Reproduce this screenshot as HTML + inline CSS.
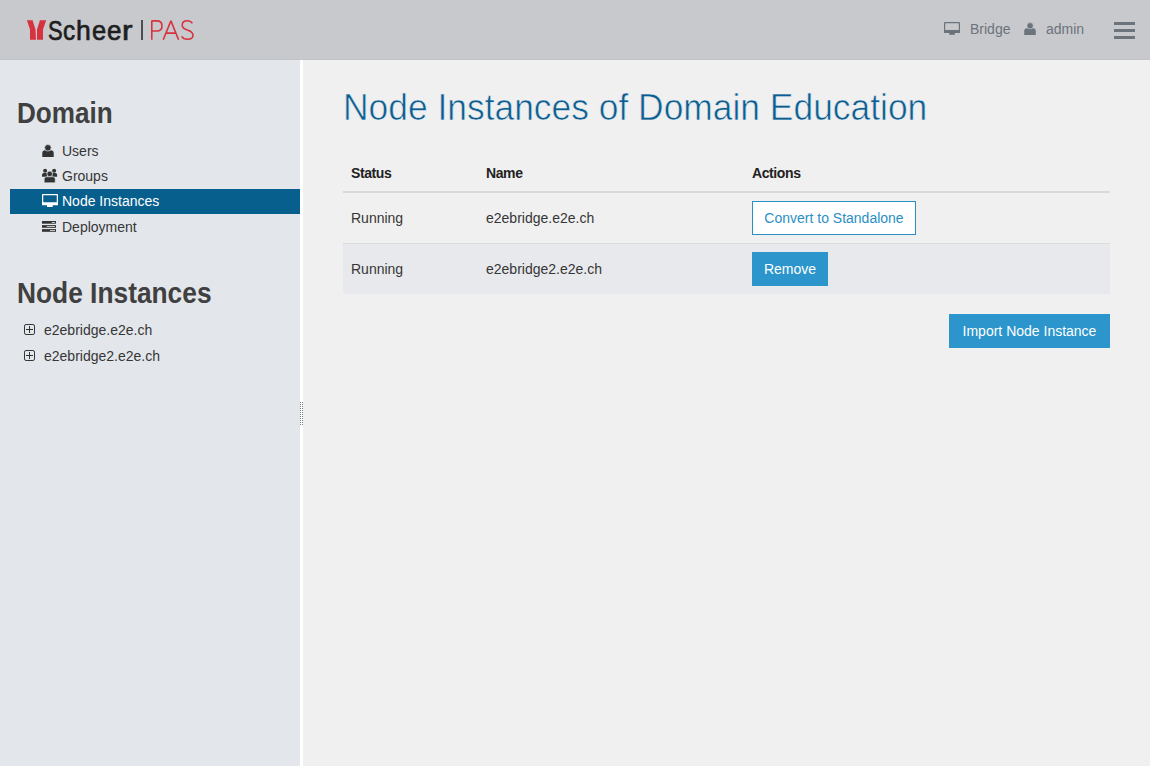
<!DOCTYPE html>
<html>
<head>
<meta charset="utf-8">
<style>
*{margin:0;padding:0;box-sizing:border-box;}
html,body{width:1150px;height:766px;overflow:hidden;}
body{font-family:"Liberation Sans",sans-serif;background:#f0f0f0;position:relative;color:#333;}
.abs{position:absolute;white-space:nowrap;}
#header{position:absolute;left:0;top:0;width:1150px;height:60px;background:#c8c9cd;border-bottom:1px solid #c3c4c8;}
#sidebar{position:absolute;left:0;top:60px;width:300px;height:706px;background:#e3e6eb;}
#splitter{position:absolute;left:300px;top:60px;width:3px;height:706px;background:#fff;}
.t14{font-size:14px;line-height:20px;}
.hdr{color:#6b737c;}
.side-h{font-size:29px;line-height:34px;font-weight:bold;color:#404040;transform-origin:0 0;}
.menu{color:#363636;}
.sel{position:absolute;left:10px;top:189px;width:290px;height:25px;background:#075f8e;}
.title{font-size:36px;line-height:44px;color:#0b5e92;transform-origin:0 0;-webkit-text-stroke:0.6px #f0f0f0;}
.logo-l{position:absolute;top:14px;font-size:27.4px;line-height:34px;color:#1e1e1e;-webkit-text-stroke:0.7px #1e1e1e;transform-origin:0 0;white-space:nowrap;}
.th{font-weight:bold;color:#222;letter-spacing:-0.4px;}
.btn{position:absolute;height:34px;font-size:14px;line-height:32px;text-align:center;white-space:nowrap;}
.btn-o{background:#fff;border:1px solid #2a8fc4;color:#2a8fc4;}
.btn-f{background:#2b95cc;color:#fff;line-height:34px;}
</style>
</head>
<body>
<div id="header">
  <svg class="abs" style="left:0;top:0" width="220" height="60" viewBox="0 0 220 60">
    <polygon points="26.9,20.2 32.6,20.2 35.5,29.6 36,39.8 30,39.8 30,29.6" fill="#d7333f"/>
    <polygon points="39.9,20.2 46.2,20.2 43,29.6 43,39.8 37,39.8 37,29.6" fill="#d7333f"/>
    <rect x="141" y="20" width="2" height="20" fill="#4d4d4d"/>
    <g fill="none" stroke="#d7333f" stroke-width="1.6" stroke-linejoin="bevel">
      <path d="M151.8,39.8 V20.9 H156.8 C160.4,20.9 162,23.2 162,26 C162,28.8 160.4,31 156.8,31 H151.8"/>
      <path d="M163.2,39.8 L170.9,20.9 L178.6,39.8 M166.3,33.1 H175.5"/>
      <path d="M192.4,23.4 C191.2,21.6 189.4,20.8 187.2,20.8 C184.2,20.8 182.2,22.6 182.2,25.2 C182.2,28 184.6,29 187.4,29.9 C190.6,30.9 193,32.2 193,35.3 C193,38 190.8,39.3 187.6,39.3 C185,39.3 182.8,38.3 181.6,36.4"/>
    </g>
  </svg>
  <div class="logo-l" style="left:48px;transform:scaleX(0.8);">S</div>
  <div class="logo-l" style="left:63.3px;transform:scaleX(0.89);">c</div>
  <div class="logo-l" style="left:76.4px;transform:scaleX(0.97);">h</div>
  <div class="logo-l" style="left:92.1px;transform:scaleX(0.93);">e</div>
  <div class="logo-l" style="left:107px;transform:scaleX(0.95);">e</div>
  <div class="logo-l" style="left:122.2px;transform:scaleX(1.15);">r</div>

  <!-- monitor icon -->
  <svg class="abs" style="left:944px;top:22px" width="16" height="13" viewBox="0 0 16 13">
    <path d="M1,0.6 H15 Q15.4,0.6 15.4,1 V10.5 H0.6 V1 Q0.6,0.6 1,0.6 Z" fill="none" stroke="#6b737c" stroke-width="1.2"/>
    <rect x="0" y="8" width="16" height="3" rx="0.6" fill="#6b737c"/>
    <rect x="5.2" y="10.8" width="5.7" height="2" fill="#6b737c"/>
  </svg>
  <div class="abs t14 hdr" style="left:970px;top:19px;">Bridge</div>
  <!-- user icon -->
  <svg class="abs" style="left:1024px;top:22px" width="12" height="13" viewBox="0 0 12 13">
    <path d="M0.2,13 V8.8 C0.2,7.3 1.4,6.3 2.8,6.3 H9.2 C10.6,6.3 11.8,7.3 11.8,8.8 V13 Z" fill="#6b737c"/>
    <circle cx="6.1" cy="3.8" r="3.2" fill="#6b737c" stroke="#c8c9cd" stroke-width="0.7"/>
  </svg>
  <div class="abs t14 hdr" style="left:1046px;top:19px;">admin</div>
  <!-- hamburger -->
  <div class="abs" style="left:1114px;top:22px;width:21px;height:3px;background:#6b737c;"></div>
  <div class="abs" style="left:1114px;top:29px;width:21px;height:3px;background:#6b737c;"></div>
  <div class="abs" style="left:1114px;top:35.5px;width:21px;height:3px;background:#6b737c;"></div>
</div>

<div id="sidebar"></div>
<div id="splitter"></div>
<!-- splitter dots -->
<svg class="abs" style="left:300px;top:402px" width="3" height="23" viewBox="0 0 3 23">
  <g fill="#7a7d82">
    <rect x="0" y="0" width="1" height="1"/><rect x="2" y="0" width="1" height="1"/>
    <rect x="0" y="2" width="1" height="1"/><rect x="2" y="2" width="1" height="1"/>
    <rect x="0" y="4" width="1" height="1"/><rect x="2" y="4" width="1" height="1"/>
    <rect x="0" y="6" width="1" height="1"/><rect x="2" y="6" width="1" height="1"/>
    <rect x="0" y="8" width="1" height="1"/><rect x="2" y="8" width="1" height="1"/>
    <rect x="0" y="10" width="1" height="1"/><rect x="2" y="10" width="1" height="1"/>
    <rect x="0" y="12" width="1" height="1"/><rect x="2" y="12" width="1" height="1"/>
    <rect x="0" y="14" width="1" height="1"/><rect x="2" y="14" width="1" height="1"/>
    <rect x="0" y="16" width="1" height="1"/><rect x="2" y="16" width="1" height="1"/>
    <rect x="0" y="18" width="1" height="1"/><rect x="2" y="18" width="1" height="1"/>
    <rect x="0" y="20" width="1" height="1"/><rect x="2" y="20" width="1" height="1"/>
    <rect x="0" y="22" width="1" height="1"/><rect x="2" y="22" width="1" height="1"/>
  </g>
</svg>

<!-- sidebar content -->
<div class="abs side-h" style="left:17px;top:96px;transform:scaleX(0.899);">Domain</div>
<div class="sel"></div>
<!-- users icon -->
<svg class="abs" style="left:42px;top:144px" width="12" height="13" viewBox="0 0 12 13">
  <path d="M0.3,13 V9 C0.3,7.4 1.5,6.3 3,6.3 H9 C10.5,6.3 11.7,7.4 11.7,9 V13 Z" fill="#333"/>
  <circle cx="5.9" cy="3.8" r="3.3" fill="#333" stroke="#e3e6eb" stroke-width="0.7"/>
</svg>
<div class="abs t14 menu" style="left:62px;top:141px;">Users</div>
<!-- groups icon -->
<svg class="abs" style="left:42px;top:168px" width="16" height="15" viewBox="0 0 16 15">
  <circle cx="3.1" cy="2.8" r="2" fill="#333"/>
  <circle cx="12.1" cy="2.8" r="2" fill="#333"/>
  <path d="M0,8.8 V6.8 C0,5.7 0.8,5 1.9,5 H5 V8.8 Z" fill="#333"/>
  <path d="M15.1,8.8 V6.8 C15.1,5.7 14.3,5 13.2,5 H10.2 V8.8 Z" fill="#333"/>
  <circle cx="7.7" cy="5.9" r="2.8" fill="#333" stroke="#e3e6eb" stroke-width="0.7"/>
  <path d="M2.2,14.8 V11.2 C2.2,9.9 3.2,8.8 4.5,8.8 H10.9 C12.2,8.8 13.2,9.9 13.2,11.2 V14.8 Z" fill="#333" stroke="#e3e6eb" stroke-width="0.6"/>
</svg>
<div class="abs t14 menu" style="left:62px;top:166px;">Groups</div>
<!-- monitor icon white -->
<svg class="abs" style="left:42px;top:194px" width="16" height="13" viewBox="0 0 16 13">
  <path d="M1,0.6 H15 Q15.4,0.6 15.4,1 V10.5 H0.6 V1 Q0.6,0.6 1,0.6 Z" fill="none" stroke="#fff" stroke-width="1.3"/>
  <rect x="0" y="8.3" width="16" height="2.6" rx="0.5" fill="#fff"/>
  <rect x="5" y="10.7" width="5.7" height="2.3" fill="#fff"/>
</svg>
<div class="abs t14" style="left:62px;top:191px;color:#fff;">Node Instances</div>
<!-- deployment icon -->
<svg class="abs" style="left:42px;top:221px" width="14" height="11" viewBox="0 0 14 11">
  <rect x="0" y="0" width="14" height="2.7" fill="#333"/>
  <rect x="0" y="4.1" width="14" height="2.7" fill="#333"/>
  <rect x="0" y="8.1" width="14" height="2.7" fill="#333"/>
  <rect x="9.8" y="1" width="3.2" height="0.8" fill="#e3e6eb"/>
  <rect x="4.7" y="5.1" width="8.3" height="0.8" fill="#e3e6eb"/>
  <rect x="8" y="9.1" width="5" height="0.8" fill="#e3e6eb"/>
</svg>
<div class="abs t14 menu" style="left:62px;top:217px;">Deployment</div>

<div class="abs side-h" style="left:17px;top:276px;transform:scaleX(0.9076);">Node Instances</div>
<svg class="abs" style="left:24px;top:324px" width="12" height="12" viewBox="0 0 12 12">
  <rect x="0.5" y="0.5" width="10" height="10" rx="1.6" fill="none" stroke="#333" stroke-width="1"/>
  <path d="M2,5.5 H9 M5.5,2 V9" stroke="#333" stroke-width="1"/>
</svg>
<div class="abs t14 menu" style="left:44px;top:320px;">e2ebridge.e2e.ch</div>
<svg class="abs" style="left:24px;top:350px" width="12" height="12" viewBox="0 0 12 12">
  <rect x="0.5" y="0.5" width="10" height="10" rx="1.6" fill="none" stroke="#333" stroke-width="1"/>
  <path d="M2,5.5 H9 M5.5,2 V9" stroke="#333" stroke-width="1"/>
</svg>
<div class="abs t14 menu" style="left:44px;top:346px;">e2ebridge2.e2e.ch</div>

<!-- main content -->
<div class="abs title" style="left:343px;top:86px;transform:scaleX(0.983);">Node Instances of Domain Education</div>

<div class="abs t14 th" style="left:351px;top:163px;">Status</div>
<div class="abs t14 th" style="left:486px;top:163px;">Name</div>
<div class="abs t14 th" style="left:752px;top:163px;">Actions</div>
<div class="abs" style="left:343px;top:191px;width:767px;height:2px;background:#d9d9d9;"></div>

<div class="abs t14 menu" style="left:351px;top:208px;">Running</div>
<div class="abs t14 menu" style="left:486px;top:208px;">e2ebridge.e2e.ch</div>
<div class="btn btn-o" style="left:752px;top:201px;width:164px;">Convert to Standalone</div>
<div class="abs" style="left:343px;top:243px;width:767px;height:1px;background:#dcdcdc;"></div>

<div class="abs" style="left:343px;top:244px;width:767px;height:50px;background:#e8e9ec;"></div>
<div class="abs t14 menu" style="left:351px;top:259px;">Running</div>
<div class="abs t14 menu" style="left:486px;top:259px;">e2ebridge2.e2e.ch</div>
<div class="btn btn-f" style="left:752px;top:252px;width:76px;">Remove</div>

<div class="btn btn-f" style="left:949px;top:314px;width:161px;">Import Node Instance</div>

</body>
</html>
